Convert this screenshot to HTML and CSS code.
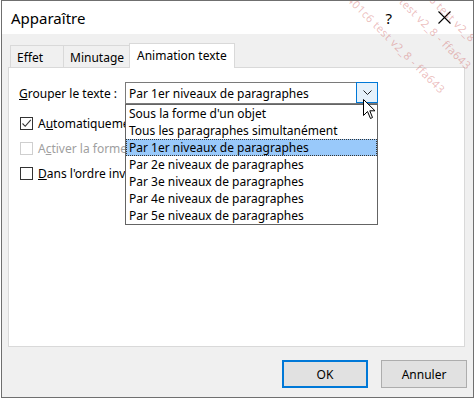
FILE: index.html
```html
<!DOCTYPE html>
<html lang="fr">
<head>
  <meta charset="UTF-8" />
  <title>Apparaître</title>
  <link rel="stylesheet" href="styles.css">
</head>
<body>
  <div class="window">
    <div class="titlebar">
      <span class="title">Apparaître</span>
      <span class="help">?</span>
      <svg class="close" width="13" height="13" viewBox="0 0 13 13">
        <path d="M0.5 0.5 L12.5 12.5 M12.5 0.5 L0.5 12.5" stroke="#000" stroke-width="1.1" fill="none"/>
      </svg>
    </div>

    <div class="tabs">
      <div class="tab">Effet</div>
      <div class="tab">Minutage</div>
      <div class="tab active">Animation texte</div>
    </div>

    <div class="panel">
      <div class="row">
        <label class="label"><u>G</u>rouper le texte :</label>
        <div class="combo">
          <span class="combo-value">Par 1er niveaux de paragraphes</span>
          <span class="combo-btn">
            <svg width="9" height="5" viewBox="0 0 9 5"><path d="M0.5 0.5 L4.5 4.5 L8.5 0.5" stroke="#222" stroke-width="1" fill="none"/></svg>
          </span>
          <ul class="combo-list">
            <li>Sous la forme d'un objet</li>
            <li>Tous les paragraphes simultanément</li>
            <li class="selected">Par 1er niveaux de paragraphes</li>
            <li>Par 2e niveaux de paragraphes</li>
            <li>Par 3e niveaux de paragraphes</li>
            <li>Par 4e niveaux de paragraphes</li>
            <li>Par 5e niveaux de paragraphes</li>
          </ul>
          <svg class="cursor" width="13" height="21" viewBox="0 0 13 21">
            <path d="M0.5 0.5 L0.5 16.5 L4.5 12.5 L7.5 19.5 L9.5 18.5 L6.8 11.8 L12 11.8 Z" fill="#fff" stroke="#000" stroke-width="1"/>
          </svg>
        </div>
      </div>
      <div class="check-row">
        <span class="box checked">
          <svg width="11" height="11" viewBox="0 0 11 11"><path d="M1.5 5.5 L4.2 8.3 L9.8 1.8" stroke="#333" stroke-width="1.1" fill="none"/></svg>
        </span>
        <span>A<u>u</u>tomatiquement après</span>
      </div>
      <div class="check-row disabled">
        <span class="box"></span>
        <span>A<u>c</u>tiver la forme animée</span>
      </div>
      <div class="check-row">
        <span class="box"></span>
        <span><u>D</u>ans l'ordre inverse</span>
      </div>
    </div>

    <div class="footer">
      <button class="btn default">OK</button>
      <button class="btn">Annuler</button>
    </div>

    <div class="watermark">
      <span class="wm wm1">8 - 401c6 test v2_8 - ffa643</span>
      <span class="wm wm2">- 401c6 test v2_8 - ffa643</span>
      <span class="wm wm3">f401c6 test v2_8 - ffa643</span>
    </div>
  </div>
</body>
</html>
```

FILE: styles.css
```css
body {
  margin: 0;
  background: #fff;
  font-family: 'Noto Sans', 'Liberation Sans', sans-serif;
  font-size: 12px;
  color: #000;
}
.window {
  position: relative;
  box-sizing: border-box;
  width: 473px;
  height: 398px;
  margin-left: 1px;
  border: 1px solid #6f6f6f;
  background: #f0f0f0;
  overflow: hidden;
}
.titlebar {
  display: flex;
  align-items: center;
  height: 33px;
  background: #fff;
}
.title {
  font-size: 15px;
  margin-left: 9px;
  flex: 1;
}
.help {
  font-size: 15px;
  margin-right: 46px;
}
.close {
  margin-right: 22px;
}
.tabs {
  display: flex;
  align-items: flex-end;
  margin: 9px 0 0 8px;
  height: 24px;
}
.tab {
  box-sizing: border-box;
  height: 22px;
  padding: 3px 6px 0 6px;
  border: 1px solid #d9d9d9;
  border-right: none;
  border-bottom: none;
  background: #f0f0f0;
}
.tab:nth-child(1) { width: 53px; }
.tab:nth-child(2) { width: 66px; }
.tab.active {
  width: 106px;
  height: 25px;
  margin-bottom: -1px;
  padding-top: 3px;
  padding-left: 7px;
  background: #fff;
  border-right: 1px solid #d9d9d9;
  position: relative;
  z-index: 1;
}
.panel {
  box-sizing: border-box;
  width: 457px;
  height: 280px;
  margin-left: 6px;
  border: 1px solid #d9d9d9;
  background: #fff;
  padding: 14px 0 0 10px;
}
.row {
  display: flex;
  align-items: center;
  height: 22px;
}
.label {
  width: 106px;
}
.combo {
  position: relative;
  box-sizing: border-box;
  width: 253px;
  height: 22px;
  border: 1px solid #7a7a7a;
  display: flex;
  align-items: center;
  padding-left: 3px;
}
.combo-value { flex: 1; }
.combo-btn {
  box-sizing: border-box;
  width: 22px;
  height: 21px;
  margin-top: -1px;
  margin-right: -1px;
  border: 1px solid #0078d7;
  background: #e5f1fb;
  display: flex;
  align-items: center;
  justify-content: center;
}
.combo-list {
  position: absolute;
  top: 21px;
  left: -1px;
  width: 253px;
  box-sizing: border-box;
  margin: 0;
  padding: 0;
  list-style: none;
  border: 1px solid #646464;
  background: #fff;
  z-index: 2;
}
.combo-list li {
  box-sizing: border-box;
  height: 17px;
  line-height: 15px;
  padding-left: 2px;
  border: 1px dotted transparent;
}
.combo-list li.selected {
  background: #99c9fa;
  border-color: #333;
}
.cursor {
  position: absolute;
  top: 16px;
  left: 237px;
  z-index: 3;
}
.check-row {
  display: flex;
  align-items: center;
  gap: 5px;
  height: 25px;
  padding-left: 1px;
}
.row + .check-row { margin-top: 7px; }
.box {
  box-sizing: border-box;
  width: 13px;
  height: 13px;
  border: 1px solid #333;
  background: #fff;
  display: flex;
  align-items: center;
  justify-content: center;
}
.disabled { color: #a0a0a0; }
.disabled .box { border-color: #cfcfcf; }
.footer {
  display: flex;
  justify-content: flex-end;
  gap: 13px;
  padding: 13px 6px 0 0;
}
.btn {
  box-sizing: border-box;
  width: 86px;
  height: 28px;
  font-family: inherit;
  font-size: 12px;
  background: #e1e1e1;
  border: 1px solid #adadad;
  padding: 0;
}
.btn.default {
  border: 2px solid #0078d7;
}
.watermark {
  position: absolute;
  inset: 0;
  pointer-events: none;
  z-index: 5;
}
.wm {
  position: absolute;
  white-space: nowrap;
  font-size: 11px;
  letter-spacing: 0.5px;
  color: rgba(200, 70, 70, 0.35);
  transform: rotate(45deg);
  transform-origin: left top;
}
.wm1 { left: 404px; top: -40px; }
.wm2 { left: 374px; top: -38px; }
.wm3 { left: 350px; top: -12px; }
```
